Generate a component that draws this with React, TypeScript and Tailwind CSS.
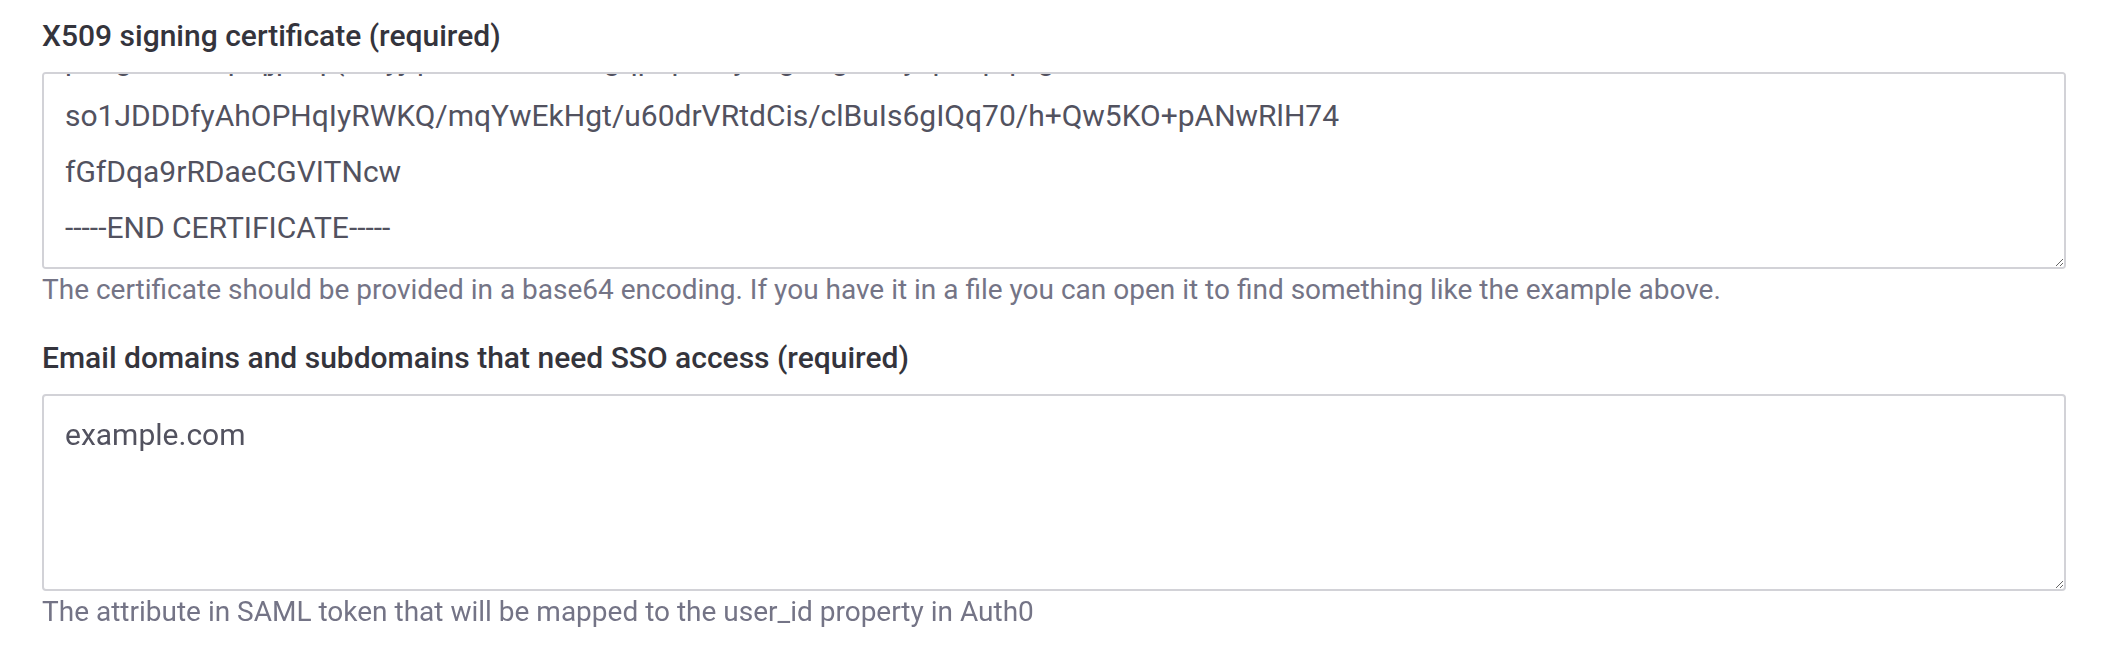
import React, { useEffect, useRef } from "react";

const CERT = `-----BEGIN CERTIFICATE-----
MIIDDTCCAfWgAwIBAgIJAK6K1PxQnXY8MA0GCSqGSIb3DQEBCwUAMCQxIjAgBgNV
BAMTGWRldi1leGFtcGxlLnVzLmF1dGgwLmNvbTAeFw0xODA0MTExMjQwNTBaFw0z
MTEyMTkxMjQwNTBaMCQxIjAgBgNVBAMTGWRldi1leGFtcGxlLnVzLmF1dGgwLmNv
bTCCASIwDQYJKoZIhvcNAQEBBQADggEPADCCAQoCggEBAMPe8y2kQpq7vqH0yQ9j
pJ9g7Kb+Lq1qjp5q (xmyjqzY8EeZHx4Mgqp6pUtcy3vgMfgVQkyzp1apqNgdh+JU4
so1JDDDfyAhOPHqIyRWKQ/mqYwEkHgt/u60drVRtdCis/clBuIs6gIQq70/h+Qw5KO+pANwRlH74
fGfDqa9rRDaeCGVITNcw
-----END CERTIFICATE-----`;

function Field({
  label,
  help,
  value,
  scrollToEnd,
}: {
  label: string;
  help: string;
  value: string;
  scrollToEnd?: boolean;
}) {
  const ref = useRef<HTMLTextAreaElement>(null);

  // the certificate box is shown scrolled down to its last lines
  useEffect(() => {
    if (scrollToEnd && ref.current) {
      ref.current.scrollTop = ref.current.scrollHeight;
    }
  }, [scrollToEnd]);

  return (
    <div className="flex flex-col">
      <label className="text-[30px] leading-[36px] font-medium text-[#34343c]">{label}</label>
      <textarea
        ref={ref}
        defaultValue={value}
        spellCheck={false}
        className="mt-[18px] h-[197px] w-full rounded-[4px] border-2 border-[#d2d2d7] bg-white px-[21px] py-[11px] text-[30px] leading-[56px] text-[#52525f] outline-none"
      />
      <p className="mt-[3px] text-[28px] leading-[36px] text-[#747486]">{help}</p>
    </div>
  );
}

export default function App() {
  return (
    <div
      className="flex min-h-[668px] w-full flex-col gap-[32px] bg-white px-[42px] pt-[18px]"
      style={{ fontFamily: "Roboto, 'Liberation Sans', sans-serif" }}
    >
      <Field
        label="X509 signing certificate (required)"
        help="The certificate should be provided in a base64 encoding. If you have it in a file you can open it to find something like the example above."
        value={CERT}
        scrollToEnd
      />
      <Field
        label="Email domains and subdomains that need SSO access (required)"
        help="The attribute in SAML token that will be mapped to the user_id property in Auth0"
        value="example.com"
      />
    </div>
  );
}
